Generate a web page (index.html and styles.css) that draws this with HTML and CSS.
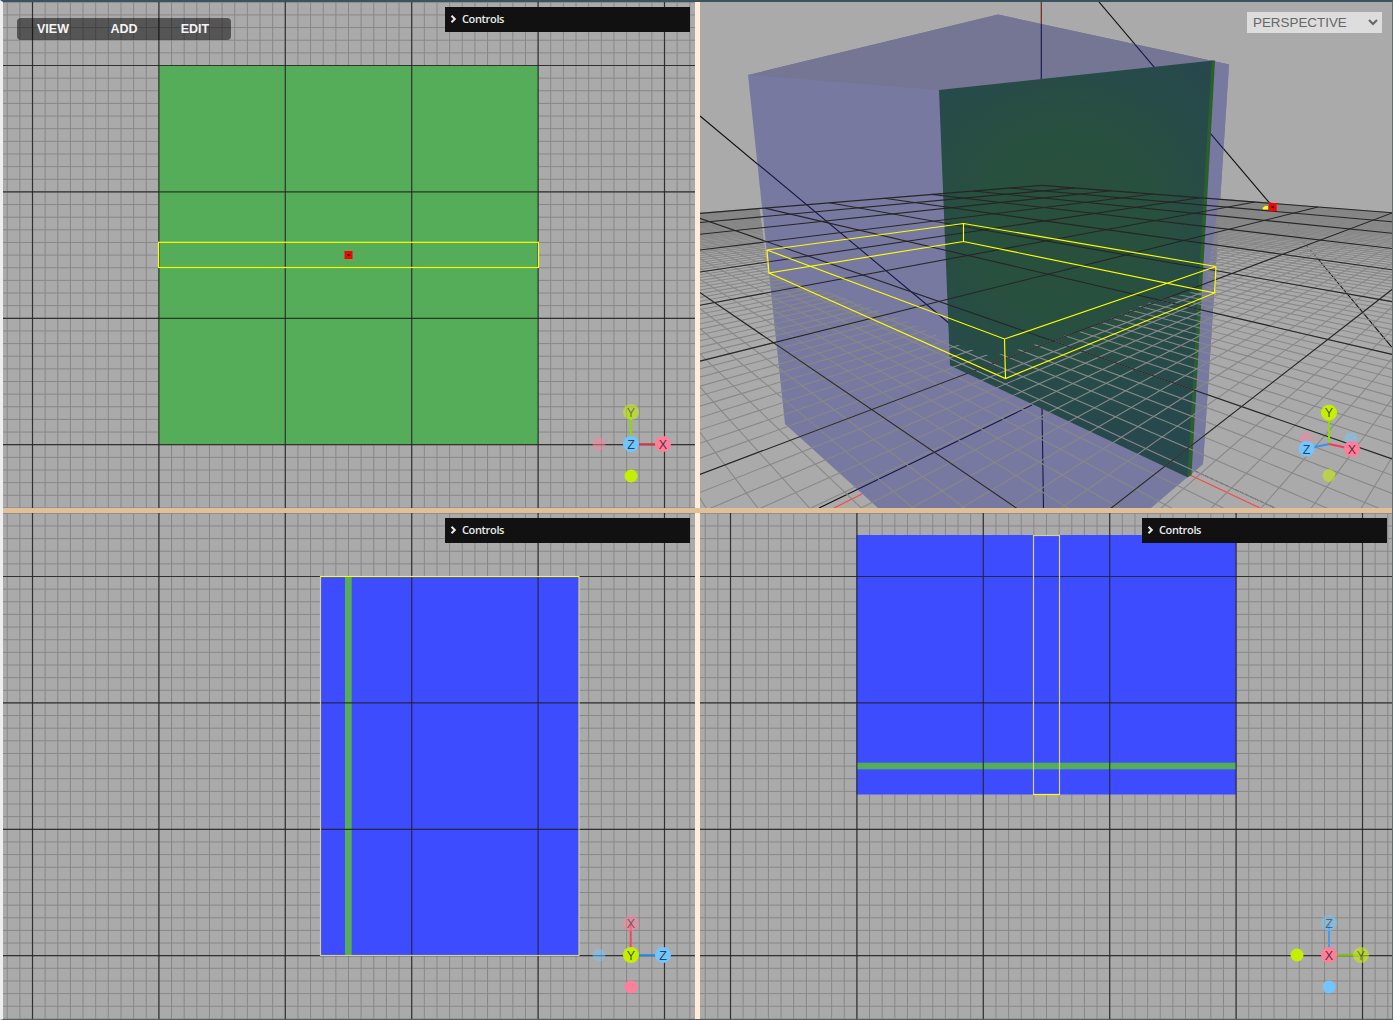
FILE: index.html
```html
<!DOCTYPE html>
<html lang="en">
<head>
<meta charset="utf-8">
<title>Scene editor</title>
<link rel="stylesheet" href="styles.css">
</head>
<body>
<svg class="defs" width="0" height="0"><defs>
  <radialGradient id="slab" gradientUnits="userSpaceOnUse" cx="1065" cy="225" r="215"><stop offset="0" stop-color="#28503b"/><stop offset=".4" stop-color="#28503e"/><stop offset=".75" stop-color="#274b49"/><stop offset="1" stop-color="#27484c"/></radialGradient>
  <clipPath id="minor"><path d="M700 205H759L768 272L850 300L905 320L950 342L990 356L1010 352L1080 331L1150 302L1205 289L1221 190L1392 205V508H700Z"/></clipPath>
  <clipPath id="box"><path d="M748 75L998 14.500L1229 64.500L1203 464L1151 508H878L785 424Z"/></clipPath>
  <linearGradient id="haze" x1="0" y1="0" x2="0" y2="1"><stop offset="0" stop-color="#858585"/><stop offset=".25" stop-color="#858585" stop-opacity=".9"/><stop offset="1" stop-color="#858585" stop-opacity="0"/></linearGradient>
</defs></svg>
<main class="workspace">
  <section class="pane">
    <svg class="view" viewBox="3 2 692 506">
      <g class="minor" data-grid="minor" data-x="32.5" data-y="65.5" data-box="3,2,695,508"></g>
      <rect class="green" x="158.500" y="65.500" width="380" height="379"/>
      <g class="major" data-grid="major" data-x="32.5" data-y="65.5" data-box="3,2,695,508"></g>
      <rect class="outline" x="158.500" y="242.300" width="380" height="25.200"/>
      <rect x="344.500" y="251" width="8" height="8" fill="#f00"/><rect x="347.500" y="254" width="2" height="2"/>
      <g class="gizmo">
        <path stroke="#8edb00" d="M630.700 444V412"/><path stroke="#e0304a" d="M631 444.200H663"/>
        <circle class="y dim" cx="631" cy="412" r="8"/><circle class="x faint" cx="599" cy="444" r="6.500"/><circle class="x" cx="663" cy="444" r="8"/><circle class="z" cx="631" cy="444" r="8"/><circle class="y" cx="631" cy="476" r="6.500"/>
        <text class="muted" x="631" y="416.500">Y</text><text x="663" y="448.500">X</text><text x="631" y="448.500">Z</text>
      </g>
    </svg>
    <nav class="menu"><a>VIEW</a><a>ADD</a><a>EDIT</a></nav>
    <div class="controls"><svg width="7" height="8" viewBox="0 0 7 8"><path d="M1.500 .8L4.800 4L1.500 7.200"/></svg>Controls</div>
  </section>
  <section class="pane">
    <svg class="view" viewBox="700 2 692 506">
      <g class="helper"><path d="M1099 2L1272 206"/><path d="M700 116L948 323M819 508L1032 405"/><path class="dash" d="M1288 224L1318 259M1195 471L1275 508"/><path d="M1318 259L1392 347.500"/><path stroke="#6e2020" d="M1041.300 2V26"/><path stroke="#f44" d="M834 508L862 494M1190 475L1260 508"/></g>
      <path fill="#7879a0" d="M748 75L998 14.500L1229 64.500L1203 464L1151 508H878L785 424Z"/>
      <path fill="#747693" d="M748 75L998 14.500L1229 64.500L939 90Z"/>
      <path fill="#7879a0" d="M1212 61L1229 64.500L1203 464L1188 477Z"/>
      <g class="inner" clip-path="url(#box)"><path d="M1041.300 22V80M1099 2L1272 206M700 116L950 324M819 508L1032 405M1042 408L1043.500 508"/></g>
      <path fill="url(#slab)" d="M939 90L1213 60.500L1188 477.500L950 365.500Z"/>
      <path fill="#29602c" d="M1211.500 60.500H1215L1191.500 475L1187.500 477.500Z"/>
      <g clip-path="url(#minor)"><g id="persp-minor"></g><path fill="url(#haze)" d="M700 213L763 208L772 255H700ZM1218 198.500L1392 213V250H1213Z"/></g>
      <g id="persp-major"></g>
      <path class="outline" d="M963.500 223.500L1216 266.500L1004.500 339L767 250ZM963.500 241.500L1214.500 293L1005.500 378.500L769 273ZM963.500 223.500V241.500M1216 266.500L1214.500 293M1004.500 339L1005.500 378.500M767 250L769 273"/>
      <path fill="#ff0" d="M1262.500 208L1265 206H1268V209.500H1263Z"/><rect x="1268.700" y="203" width="8" height="8" fill="#f00"/><rect x="1271.700" y="206" width="2" height="2"/>
      <g class="gizmo">
        <circle class="x faint" cx="1306" cy="439" r="6.500"/><circle class="z faint" cx="1351" cy="439" r="6.500"/>
        <path stroke="#8edb00" d="M1329 444V412"/><path stroke="#3090ff" d="M1329 444L1306 449"/><path stroke="#ff3653" d="M1329 444L1352 449"/>
        <circle class="y" cx="1329" cy="412.700" r="8"/><circle class="z" cx="1306.500" cy="448.700" r="8"/><circle class="x" cx="1352" cy="449" r="8"/><circle class="y dim" cx="1329" cy="475.500" r="6.500"/>
        <text x="1329" y="417">Y</text><text x="1306.500" y="453.500">Z</text><text x="1352" y="453.500">X</text>
      </g>
    </svg>
    <div class="camera"><span>PERSPECTIVE</span><svg width="10" height="7" viewBox="0 0 10 7"><path d="M1 1L5 5L9 1"/></svg></div>
  </section>
  <section class="pane">
    <svg class="view" viewBox="3 513 692 506">
      <g class="minor" data-grid="minor" data-x="32.5" data-y="576.5" data-box="3,513,695,1019"></g>
      <rect class="blue" x="320" y="576" width="259" height="379.500"/><rect class="green" x="345" y="576" width="6.700" height="379.500"/>
      <g class="major" data-grid="major" data-x="32.5" data-y="576.5" data-box="3,513,695,1019"></g>
      <rect class="outline pale" x="320.500" y="576.500" width="258.500" height="379"/><path class="outline" d="M320 576.500H579"/>
      <g class="gizmo">
        <path stroke="#f0485f" d="M630.700 955V924"/><path stroke="#2a86e6" d="M631 955.200H663"/>
        <circle class="x faint" cx="631" cy="923" r="8"/><circle class="z faint" cx="599" cy="955" r="6.500"/><circle class="z" cx="663" cy="955" r="8"/><circle class="y" cx="631" cy="955" r="8"/><circle class="x" cx="631" cy="987" r="6.500"/>
        <text class="muted" x="631" y="927.500">X</text><text x="663" y="959.500">Z</text><text x="631" y="959.500">Y</text>
      </g>
    </svg>
    <div class="controls"><svg width="7" height="8" viewBox="0 0 7 8"><path d="M1.500 .8L4.800 4L1.500 7.200"/></svg>Controls</div>
  </section>
  <section class="pane">
    <svg class="view" viewBox="700 513 692 506">
      <g class="minor" data-grid="minor" data-x="730.5" data-y="576.5" data-box="700,513,1392,1019"></g>
      <rect class="blue" x="856.500" y="535" width="379.500" height="259.500"/><rect class="green" x="857" y="762.700" width="379" height="6.600"/>
      <g class="major" data-grid="major" data-x="730.5" data-y="576.5" data-box="700,513,1392,1019"></g>
      <rect class="outline pale" x="1033.500" y="535.500" width="26" height="259"/><path class="outline" d="M1033 794.500H1060"/>
      <g class="gizmo">
        <path stroke="#4a98f0" d="M1329 955V924"/><path stroke="#7ac000" d="M1329 955.200H1361"/>
        <circle class="z faint" cx="1329" cy="923" r="8"/><circle class="y dim" cx="1361" cy="955" r="8"/><circle class="x" cx="1329" cy="955" r="8"/><circle class="y" cx="1297" cy="955" r="6.500"/><circle class="z" cx="1329" cy="987" r="6.500"/>
        <text class="muted" x="1329" y="927.500">Z</text><text class="muted" x="1361" y="959.500">Y</text><text x="1329" y="959.500">X</text>
      </g>
    </svg>
    <div class="controls"><svg width="7" height="8" viewBox="0 0 7 8"><path d="M1.500 .8L4.800 4L1.500 7.200"/></svg>Controls</div>
  </section>
</main>
<script src="grid.js"></script>
</body>
</html>
```

FILE: styles.css
```css
* { box-sizing: border-box; }
body { margin: 0; background: #f2f2f2; font-family: "Liberation Sans", Arial, sans-serif; overflow: hidden; }
.defs { position: absolute; }
.workspace {
  width: 1393px; height: 1020px;
  border-top: 2px solid #3b5260; border-bottom: 1px solid #556063; border-right: 1px solid #587078; border-left: 3px solid #eee;
  display: grid; grid-template-columns: 692px 692px; grid-template-rows: 506px 506px; gap: 5px;
  background: linear-gradient(#e2c097, #e2c097) 0 506px / 100% 5px no-repeat, #ffecd9;
}
.pane { position: relative; overflow: hidden; background: #aaa; }
.view { display: block; width: 692px; height: 506px; }
.minor { stroke: #888; stroke-width: 1; }
.major { stroke: #222; stroke-width: 1.2; stroke-opacity: .85; }
.green { fill: #55ac59; }
.blue { fill: #3e4cff; }
.outline { fill: none; stroke: #ff0; stroke-width: 1.15; }
.pale { stroke: #d4d48c; }
.helper { fill: none; stroke: #111; stroke-width: 1.15; }
.helper .dash { stroke-dasharray: 4 1.5; stroke-width: .8; }
.inner { stroke: #17174a; fill: none; stroke-width: 1.1; }
#persp-major { stroke: #262626; stroke-width: 1.1; }
#persp-minor { stroke: #888; stroke-width: 1.1; }
.gizmo { stroke-width: 2; }
.gizmo circle, .gizmo text { stroke: none; }
.gizmo text { font-size: 12.500px; text-anchor: middle; fill: #000; fill-opacity: .68; }
.gizmo .muted { fill-opacity: .45; }
.x { fill: #ff7f9b; }
.y { fill: #c4f000; }
.z { fill: #73c5ff; }
.faint { fill-opacity: .5; }
.dim { fill-opacity: .55; }
.menu {
  position: absolute; left: 14px; top: 16px; width: 214px; height: 22px; border-radius: 4px; padding-left: .5px;
  background: rgba(0, 0, 0, .5); display: grid; grid-template-columns: repeat(3, 71px);
  color: #f4f4f4; font-size: 12.500px; font-weight: bold; line-height: 22px; text-align: center;
}
.controls {
  position: absolute; right: 5px; top: 5px; width: 245px; height: 25px; padding: 0 0 2px 5px;
  display: flex; align-items: center; gap: 5px; background: #111; color: #ebebeb;
  font: 600 11px/23px "Open Sans", "Noto Sans", sans-serif; letter-spacing: -.35px;
}
.controls svg { fill: none; stroke: #ebebeb; stroke-width: 2; }
.camera {
  position: absolute; right: 10px; top: 10px; width: 135px; height: 21px; padding: 0 4px 0 6px;
  display: flex; align-items: center; justify-content: space-between;
  background: #ddd; color: #666; font-size: 13.400px;
}
.camera svg { fill: none; stroke: #666; stroke-width: 2; }
```

FILE: grid.js
```js
const SIZE = 126.4;
const line = (x1, y1, x2, y2) =>
  `<line x1="${x1.toFixed(2)}" y1="${y1.toFixed(2)}" x2="${x2.toFixed(2)}" y2="${y2.toFixed(2)}"/>`;

// Flat grids of the orthographic views
document.querySelectorAll("[data-grid]").forEach((g) => {
  const minor = g.dataset.grid === "minor";
  const step = minor ? SIZE / 10 : SIZE;
  const [l, t, r, b] = g.dataset.box.split(",").map(Number);
  let out = "";
  for (let i = minor ? -10 : -1; i < 70; i++) {
    const x = +g.dataset.x + i * step, y = +g.dataset.y + i * step;
    if (x > l && x < r) out += line(x, t, x, b);
    if (y > t && y < b) out += line(l, y, r, y);
  }
  g.innerHTML = out;
});

// Ground plane seen through the perspective camera
const depth = (i, j) => 0.983 * i + 1.016 * j + 1.986;
const project = (i, j) => {
  const w = depth(i, j);
  return [(469 * i + 1608 * j + 2119) / w, 141 + 797.3 / w];
};
const NEAR = 0.6, FAR = 8;
const ground = (step) => {
  let out = "";
  for (let k = -8 / step; k <= FAR / step + 0.001; k++) {
    const v = k * step;
    const j0 = Math.max(-8, (NEAR - 1.986 - 0.983 * v) / 1.016);
    const i0 = Math.max(-8, (NEAR - 1.986 - 1.016 * v) / 0.983);
    if (j0 < FAR) out += line(...project(v, j0), ...project(v, FAR));
    if (i0 < FAR) out += line(...project(i0, v), ...project(FAR, v));
  }
  return out;
};
document.getElementById("persp-minor").innerHTML = ground(0.1);
document.getElementById("persp-major").innerHTML = ground(1);
```
